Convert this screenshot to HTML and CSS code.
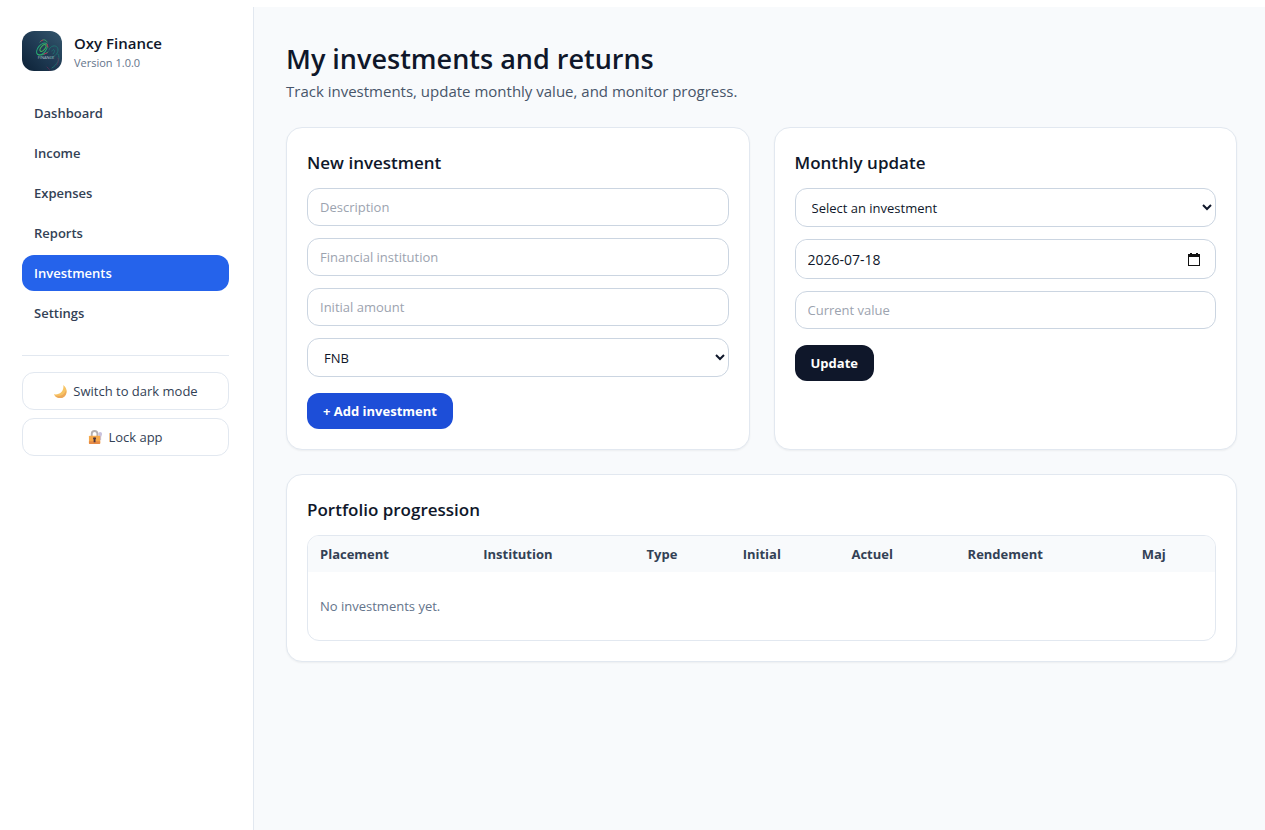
FILE: index.html
```
<!DOCTYPE html>
<html lang="en">
<head>
  <meta charset="UTF-8">
  <meta name="viewport" content="width=device-width, initial-scale=1.0">
  <title>Oxy Finance</title>
  <link rel="stylesheet" href="styles.css">
</head>
<body>
  <aside class="sidebar">
    <div class="brand">
      <svg class="brand-logo" viewBox="0 0 40 40" aria-hidden="true">
        <defs>
          <linearGradient id="logo-bg" x1="1" y1="0" x2="0" y2="1">
            <stop offset="0" stop-color="#34566c"/>
            <stop offset="0.5" stop-color="#203b54"/>
            <stop offset="1" stop-color="#0c2136"/>
          </linearGradient>
        </defs>
        <rect width="40" height="40" fill="url(#logo-bg)"/>
        <g fill="none" stroke-linecap="round">
          <g stroke="#1f7a74" stroke-width="1" opacity="0.8">
            <path d="M27 19c1-5 9-6 9 0 0 4-5 8-8 8"/>
            <path d="M30 20c2-4 4 1 1 3M36 23c3 4-1 11-6 14"/>
          </g>
          <path d="M25 36c2 2 3 3 3 4M36 27c1 3 0 5-1 7" stroke="#6b2f58" opacity="0.7"/>
          <ellipse cx="20" cy="18" rx="7" ry="4" transform="rotate(-50 20 18)" stroke="#25a878" stroke-width="1"/>
          <ellipse cx="21" cy="17" rx="4" ry="2" transform="rotate(-50 21 17)" stroke="#43b65b" stroke-width="1"/>
          <path d="M18 11c2-3 6-3 7 0M15 23c3 2 7 1 11-2" stroke="#2fae68"/>
          <path d="M19 10l2-1M25 13l1 3M22 23l3-1" stroke="#b32d58"/>
        </g>
        <text class="brand-mark" x="24" y="28" text-anchor="middle">FINANCE</text>
      </svg>
      <div>
        <p class="brand-name">Oxy Finance</p>
        <p class="brand-version">Version 1.0.0</p>
      </div>
    </div>

    <nav class="nav">
      <a href="#dashboard">Dashboard</a>
      <a href="#income">Income</a>
      <a href="#expenses">Expenses</a>
      <a href="#reports">Reports</a>
      <a href="#investments" class="active" aria-current="page">Investments</a>
      <a href="#settings">Settings</a>
    </nav>

    <div class="sidebar-actions">
      <button type="button" class="btn-outline">
        <svg class="emoji" viewBox="0 0 16 16" aria-hidden="true">
          <path d="M11 1c6 5 4 13-3 14-3 0-6-1-7-4 6 1 11-3 10-10z" fill="#f7c464"/>
          <path d="M2 12c6 2 11-1 12-6 1 5-2 9-6 9-3 0-5-1-6-3z" fill="#eda95a"/>
        </svg>
        Switch to dark mode
      </button>
      <button type="button" class="btn-outline">
        <svg class="emoji" viewBox="0 0 16 16" aria-hidden="true">
          <path d="M11 4a2 2 0 0 1 4 0c0 2-1 2-1 4v3h-2z" fill="#c9c2de"/>
          <path d="M4 7V4a3 3 0 0 1 6 0v3" fill="none" stroke="#b5afb0" stroke-width="2"/>
          <rect x="1" y="6" width="12" height="9" rx="1" fill="#f5a84b"/>
          <path d="M1 12h12v2l-1 1H2l-1-1z" fill="#e68a45"/>
          <path d="M7 8a1 1 0 0 1 1 2v3H6v-3a1 1 0 0 1 1-2z" fill="#4a3440"/>
        </svg>
        Lock app
      </button>
    </div>
  </aside>

  <main class="content">
    <header class="page-header">
      <h1>My investments and returns</h1>
      <p>Track investments, update monthly value, and monitor progress.</p>
    </header>

    <div class="cards">
      <section class="card">
        <h2>New investment</h2>
        <form class="form">
          <input type="text" placeholder="Description" aria-label="Description">
          <input type="text" placeholder="Financial institution" aria-label="Financial institution">
          <input type="text" inputmode="decimal" placeholder="Initial amount" aria-label="Initial amount">
          <select aria-label="Type">
            <option>FNB</option>
          </select>
          <button type="button" class="btn btn-primary">+ Add investment</button>
        </form>
      </section>

      <section class="card">
        <h2>Monthly update</h2>
        <form class="form">
          <select aria-label="Investment">
            <option>Select an investment</option>
          </select>
          <div class="date-field">
            <input type="text" value="2026-07-18" aria-label="Date">
            <svg viewBox="0 0 12 13" aria-hidden="true">
              <path d="M2 0h2v1h4V0h2v1h2v12H0V1h2zM1 4v8h10V4z" fill="#111" fill-rule="evenodd"/>
            </svg>
          </div>
          <input type="text" inputmode="decimal" placeholder="Current value" aria-label="Current value">
          <button type="button" class="btn btn-dark">Update</button>
        </form>
      </section>
    </div>

    <section class="card">
      <h2>Portfolio progression</h2>
      <div class="table-wrap">
        <table>
          <colgroup>
            <col class="col-name">
            <col class="col-name">
            <col class="col-type">
            <col class="col-initial">
            <col class="col-current">
            <col class="col-return">
            <col>
          </colgroup>
          <thead>
            <tr>
              <th>Placement</th>
              <th>Institution</th>
              <th>Type</th>
              <th>Initial</th>
              <th>Actuel</th>
              <th>Rendement</th>
              <th>Maj</th>
            </tr>
          </thead>
          <tbody>
            <tr>
              <td colspan="7">No investments yet.</td>
            </tr>
          </tbody>
        </table>
      </div>
    </section>
  </main>
</body>
</html>
```
FILE: styles.css
```
* {
  box-sizing: border-box;
}
body {
  margin: 0;
  padding-top: 7px;
  min-height: 100vh;
  display: flex;
  background-color: #fff;
  color: #0f172a;
  font-family: "Segoe UI", "Open Sans", "Noto Sans", sans-serif;
  font-size: 13px;
  line-height: 20px;
}
h1, h2, p {
  margin: 0;
}
button, input, select {
  font: inherit;
  color: inherit;
}

/* Sidebar */
.sidebar {
  width: 254px;
  flex-shrink: 0;
  padding: 24px 24px 24px 22px;
  border-right: 1px solid #e2e8f0;
}
.brand {
  display: flex;
  align-items: center;
  gap: 12px;
}
.brand-logo {
  width: 40px;
  height: 40px;
  border-radius: 12px;
}
.brand-mark {
  font-size: 4px;
  fill: #b6c3cc;
}
.brand-name {
  font-size: 15px;
  font-weight: 600;
  line-height: 24px;
}
.brand-version {
  font-size: 11px;
  line-height: 16px;
  color: #64748b;
}
.nav {
  display: flex;
  flex-direction: column;
  gap: 4px;
  margin-top: 24px;
}
.nav a {
  padding: 8px 12px;
  border-radius: 12px;
  color: #334155;
  font-weight: 600;
  text-decoration: none;
}
.nav a.active {
  background-color: #2563eb;
  color: #fff;
}
.sidebar-actions {
  display: flex;
  flex-direction: column;
  gap: 8px;
  margin-top: 24px;
  padding-top: 16px;
  border-top: 1px solid #e2e8f0;
}
.btn-outline {
  display: flex;
  align-items: center;
  justify-content: center;
  gap: 5px;
  padding: 8px 12px;
  border: 1px solid #e2e8f0;
  border-radius: 12px;
  background-color: #fff;
  color: #334155;
  cursor: pointer;
}
.emoji {
  width: 15px;
  height: 15px;
}

/* Content */
.content {
  flex: 1;
  min-width: 0;
  padding: 32px 28px 32px 32px;
  background-color: #f8fafc;
}
.page-header {
  margin-bottom: 24px;
}
.page-header h1 {
  font-size: 27px;
  font-weight: 600;
  line-height: 40px;
}
.page-header p {
  font-size: 15px;
  line-height: 24px;
  color: #475569;
}
.cards {
  display: grid;
  grid-template-columns: 1fr 1fr;
  gap: 24px;
  margin-bottom: 24px;
}
.card {
  padding: 20px;
  background-color: #fff;
  border: 1px solid #e2e8f0;
  border-radius: 16px;
  box-shadow: 0 1px 2px rgba(0, 0, 0, 0.05);
}
.card h2 {
  margin-bottom: 10px;
  font-size: 17px;
  font-weight: 600;
  line-height: 30px;
}

/* Forms */
.form {
  display: flex;
  flex-direction: column;
  gap: 12px;
}
.form input,
.form select {
  width: 100%;
  height: 38px;
  padding: 8px 12px;
  border: 1px solid #cbd5e1;
  border-radius: 12px;
  background-color: #fff;
}
.form select {
  height: 39px;
  padding: 8px 0 8px 12px;
}
.form input::placeholder {
  color: #9ca3af;
}
.date-field {
  display: flex;
  align-items: center;
  height: 40px;
  padding-right: 15px;
  border: 1px solid #cbd5e1;
  border-radius: 12px;
}
.form .date-field input {
  flex: 1;
  border: none;
  font-size: 14px;
}
.date-field svg {
  width: 12px;
  height: 13px;
}
.btn {
  align-self: flex-start;
  margin-top: 4px;
  padding: 8px 16px;
  border: none;
  border-radius: 12px;
  color: #fff;
  font-weight: 700;
  cursor: pointer;
}
.btn-primary {
  background-color: #1d4ed8;
}
.btn-dark {
  background-color: #0f172a;
}

/* Portfolio table */
.table-wrap {
  overflow: hidden;
  border: 1px solid #e2e8f0;
  border-radius: 12px;
}
table {
  width: 100%;
  border-collapse: collapse;
  table-layout: fixed;
}
.col-name {
  width: 18%;
}
.col-type {
  width: 10.6%;
}
.col-initial {
  width: 12%;
}
.col-current {
  width: 12.8%;
}
.col-return {
  width: 19.2%;
}
th {
  padding: 8px 12px;
  background-color: #f8fafc;
  color: #334155;
  font-weight: 700;
  text-align: left;
}
td {
  padding: 24px 12px;
  color: #64748b;
}
```
